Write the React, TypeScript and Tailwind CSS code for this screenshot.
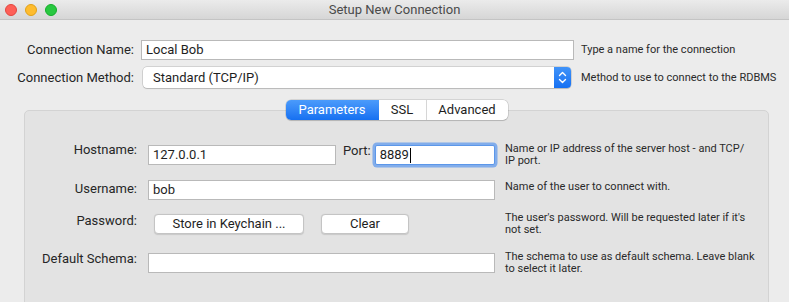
import React from "react";

const font = { fontFamily: "Roboto, 'Liberation Sans', sans-serif" };

function TextBox({ value, className = "" }: { value?: string; className?: string }) {
  return (
    <div
      className={`h-[20px] bg-white border border-[#b9b9b9] flex items-center pl-[4px] text-[13px] text-[#1e1e1e] ${className}`}
    >
      {value}
    </div>
  );
}

function Help({ children, className = "" }: { children: React.ReactNode; className?: string }) {
  return <div className={`whitespace-nowrap text-[11px] leading-[12px] text-[#2a2a2a] ${className}`}>{children}</div>;
}

function PushButton({ label, className = "" }: { label: string; className?: string }) {
  return (
    <div
      className={`h-[20px] bg-white rounded-[4px] border border-[#c4c4c4] shadow-[0_0.5px_1px_rgba(0,0,0,0.12)] flex items-center justify-center text-[13px] text-[#1e1e1e] ${className}`}
    >
      {label}
    </div>
  );
}

function Label({ children, className = "" }: { children: React.ReactNode; className?: string }) {
  return <div className={`w-[112px] shrink-0 text-right text-[13px] leading-[16px] ${className}`}>{children}</div>;
}

export default function App() {
  return (
    <div className="w-[789px] h-[302px] overflow-hidden bg-[#ececec] text-[#262626]" style={font}>
      {/* Title bar */}
      <div className="h-[20px] grid grid-cols-[1fr_auto_1fr] items-center bg-gradient-to-b from-[#ebebeb] to-[#d6d6d6] border-b border-[#c4c4c4]">
        <div className="flex items-center gap-[8px] pl-[5px]">
          <span className="w-[12px] h-[12px] rounded-full bg-[#fe5f57] border border-[#e2463f]" />
          <span className="w-[12px] h-[12px] rounded-full bg-[#febc2e] border border-[#e1a116]" />
          <span className="w-[12px] h-[12px] rounded-full bg-[#28c840] border border-[#14ae2a]" />
        </div>
        <div className="text-[13px] text-[#4a4a4a] leading-[16px]">Setup New Connection</div>
        <div />
      </div>

      {/* Connection Name */}
      <div className="flex items-center h-[20px] mt-[20px]">
        <div className="w-[134px] text-right text-[13px]">Connection Name:</div>
        <TextBox value="Local Bob" className="ml-[7px] w-[433px]" />
        <Help className="ml-[7px]">Type a name for the connection</Help>
      </div>

      {/* Connection Method */}
      <div className="flex items-center h-[21px] mt-[7px]">
        <div className="w-[134px] text-right text-[13px]">Connection Method:</div>
        <div className="ml-[9px] w-[428px] h-[21px] flex rounded-[4px] bg-white shadow-[0_0_0_0.5px_rgba(0,0,0,0.22),0_1px_1px_rgba(0,0,0,0.12)]">
          <div className="flex-1 flex items-center pl-[10px] text-[13px] text-[#1e1e1e]">Standard (TCP/IP)</div>
          <div className="w-[17px] h-full rounded-r-[4px] bg-gradient-to-b from-[#3f93f9] to-[#1570f2] flex items-center justify-center">
            <svg width="9" height="13" viewBox="0 0 9 13" fill="none" stroke="white" strokeWidth="1.4" strokeLinecap="round" strokeLinejoin="round">
              <path d="M1.5 4.5 L4.5 1.5 L7.5 4.5" />
              <path d="M1.5 8.5 L4.5 11.5 L7.5 8.5" />
            </svg>
          </div>
        </div>
        <Help className="ml-[10px]">Method to use to connect to the RDBMS</Help>
      </div>

      {/* Tabs */}
      <div className="relative z-10 mt-[12px] ml-[24px] w-[745px] flex justify-center">
        <div className="flex h-[20px] rounded-[5px] bg-white shadow-[0_0_0_0.5px_rgba(0,0,0,0.2),0_1px_1px_rgba(0,0,0,0.12)] text-[13px] overflow-hidden">
          <div className="w-[93px] flex items-center justify-center text-white bg-gradient-to-b from-[#4b9bfb] to-[#1570f1]">
            Parameters
          </div>
          <div className="w-[47px] flex items-center justify-center text-[#1e1e1e]">SSL</div>
          <div className="w-[82px] flex items-center justify-center text-[#1e1e1e] border-l border-[#d6d6d6]">
            Advanced
          </div>
        </div>
      </div>

      {/* Group box */}
      <div className="-mt-[10px] ml-[24px] w-[745px] h-[200px] rounded-[5px] bg-[#e3e3e3] border border-[#d3d3d3] pt-[34px]">
        {/* Hostname */}
        <div className="flex items-center h-[20px]">
          <Label className="mb-[10px]">Hostname:</Label>
          <div className="ml-[11px] w-[347px] flex items-center">
            <TextBox value="127.0.0.1" className="w-[188px]" />
            <div className="ml-[7px] text-[13px] leading-[16px] mb-[8px]">Port:</div>
            <div className="ml-[4px] w-[120px] h-[20px] bg-white border border-[#5c97e9] rounded-[2px] shadow-[0_0_0_2.5px_rgba(98,155,238,0.75)] flex items-center pl-[4px] text-[13px] text-[#1e1e1e]">
              8889
              <span className="inline-block w-[1px] h-[15px] bg-black ml-[1px]" />
            </div>
          </div>
          <Help className="ml-[10px]">
            Name or IP address of the server host - and TCP/
            <br />
            IP port.
          </Help>
        </div>

        {/* Username */}
        <div className="flex items-center h-[20px] mt-[15px]">
          <Label className="mb-[3px]">Username:</Label>
          <TextBox value="bob" className="ml-[11px] w-[347px]" />
          <Help className="ml-[10px] mb-[6px]">Name of the user to connect with.</Help>
        </div>

        {/* Password */}
        <div className="flex items-center h-[20px] mt-[14px]">
          <Label className="mb-[6px]">Password:</Label>
          <div className="ml-[11px] w-[347px] flex items-center pl-[6px]">
            <PushButton label="Store in Keychain ..." className="w-[150px]" />
            <PushButton label="Clear" className="ml-[17px] w-[88px]" />
          </div>
          <Help className="ml-[10px]">
            The user's password. Will be requested later if it's
            <br />
            not set.
          </Help>
        </div>

        {/* Default Schema */}
        <div className="flex items-center h-[20px] mt-[19px]">
          <Label className="mb-[8px]">Default Schema:</Label>
          <TextBox className="ml-[11px] w-[347px]" />
          <Help className="ml-[10px]">
            The schema to use as default schema. Leave blank
            <br />
            to select it later.
          </Help>
        </div>
      </div>
    </div>
  );
}
